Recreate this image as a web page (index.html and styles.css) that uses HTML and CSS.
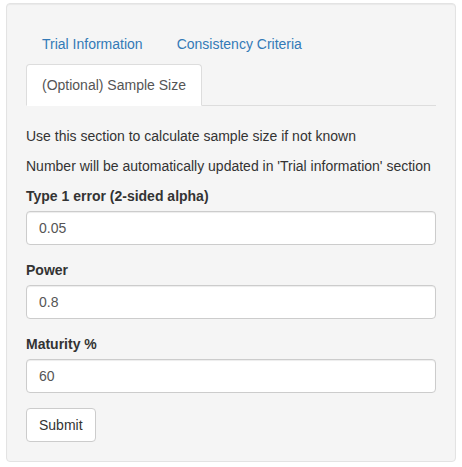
FILE: index.html
```html
<!DOCTYPE html>
<html>
<head>
<meta charset="utf-8">
<link rel="stylesheet" href="styles.css">
</head>
<body>
<div class="page">
  <div class="well">
    <ul class="nav-tabs">
      <li><a href="#">Trial Information</a></li>
      <li><a href="#">Consistency Criteria</a></li>
      <li class="active"><a href="#">(Optional) Sample Size</a></li>
    </ul>
    <div class="tab-content">
      <p>Use this section to calculate sample size if not known</p>
      <p>Number will be automatically updated in 'Trial information' section</p>
      <div class="form-group">
        <label class="control-label">Type 1 error (2-sided alpha)</label>
        <input class="form-control" type="text" value="0.05">
      </div>
      <div class="form-group">
        <label class="control-label">Power</label>
        <input class="form-control" type="text" value="0.8">
      </div>
      <div class="form-group">
        <label class="control-label">Maturity %</label>
        <input class="form-control" type="text" value="60">
      </div>
      <button class="btn" type="button">Submit</button>
    </div>
  </div>
</div>
</body>
</html>
```
FILE: styles.css
```css
* { box-sizing: border-box; }
html, body { margin: 0; padding: 0; background: #fff; }
body {
  font-family: "Liberation Sans", Arial, sans-serif;
  font-size: 14px;
  line-height: 20px;
  color: #333;
}
.page { padding: 3px 0 0 6px; }
.well {
  width: 450px;
  background: #f5f5f5;
  border: 1px solid #e3e3e3;
  border-radius: 4px;
  padding: 19px;
  box-shadow: inset 0 1px 1px rgba(0,0,0,.05);
}
.nav-tabs {
  list-style: none;
  margin: 0;
  padding: 0;
  display: flex;
  flex-wrap: wrap;
  border-bottom: 1px solid #ddd;
}
.nav-tabs li { margin: 0 2px -1px 0; }
.nav-tabs li a {
  display: block;
  padding: 10px 15px;
  border: 1px solid transparent;
  border-radius: 4px 4px 0 0;
  color: #337ab7;
  text-decoration: none;
  line-height: 20px;
}
.nav-tabs li.active a {
  color: #555;
  background: #fff;
  border-color: #ddd #ddd transparent;
}
.tab-content { padding-top: 20px; }
.tab-content p { margin: 0 0 10px; }
.form-group { margin-bottom: 15px; }
.control-label {
  display: inline-block;
  margin-bottom: 5px;
  font-weight: bold;
}
.form-control {
  display: block;
  width: 100%;
  height: 34px;
  padding: 6px 12px;
  font-family: inherit;
  font-size: 14px;
  line-height: 20px;
  color: #555;
  background: #fff;
  border: 1px solid #ccc;
  border-radius: 4px;
  box-shadow: inset 0 1px 1px rgba(0,0,0,.075);
  margin: 0;
}
.btn {
  display: inline-block;
  height: 34px;
  padding: 6px 12px;
  font-family: inherit;
  font-size: 14px;
  line-height: 20px;
  color: #333;
  background: #fff;
  border: 1px solid #ccc;
  border-radius: 4px;
  margin: 0;
}
```
